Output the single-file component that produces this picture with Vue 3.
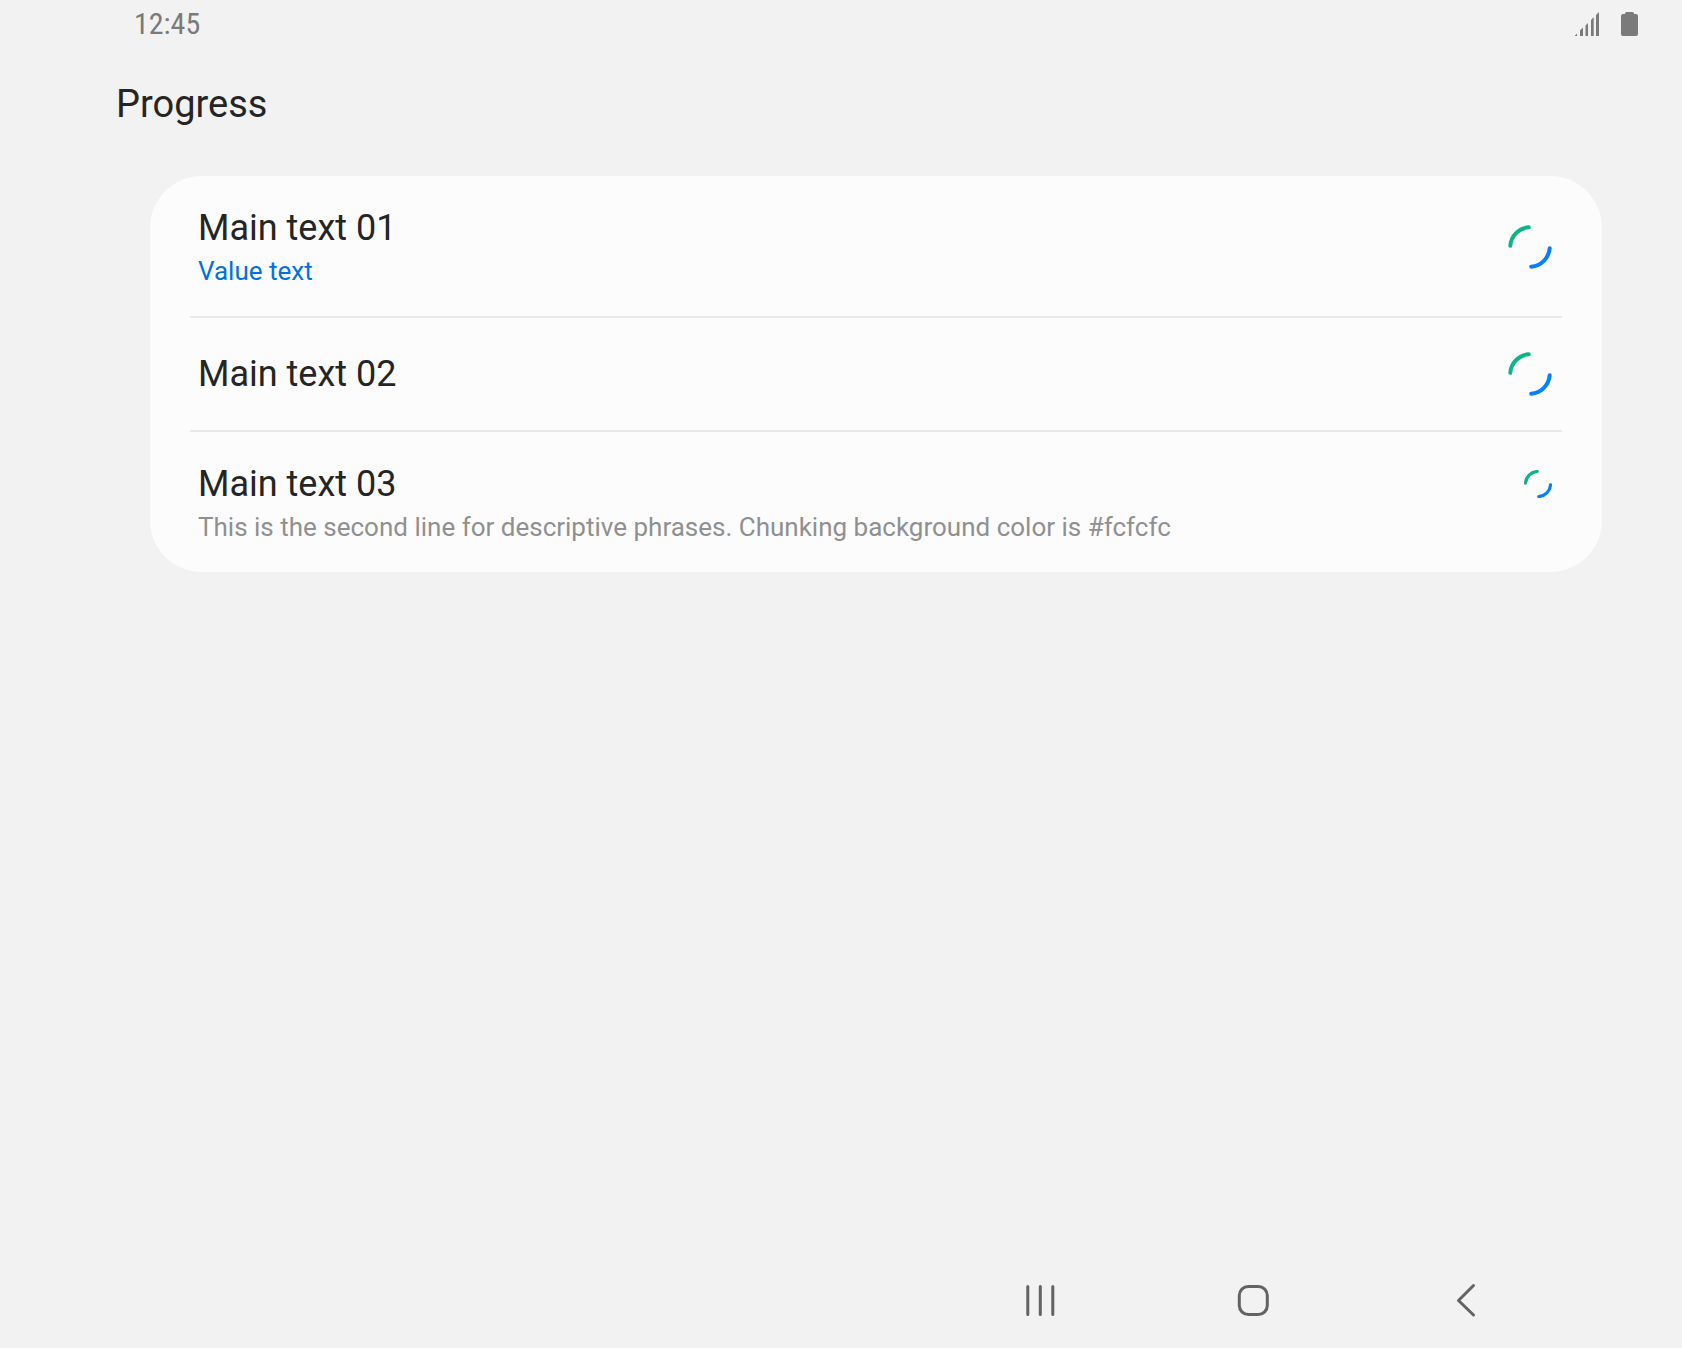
<script setup>
const rows = [
  { title: 'Main text 01', value: 'Value text' },
  { title: 'Main text 02' },
  {
    title: 'Main text 03',
    description: 'This is the second line for descriptive phrases. Chunking background color is #fcfcfc',
    small: true
  }
]
</script>

<template>
  <div class="screen">
    <div class="status-bar">
      <time class="clock">12:45</time>
      <div class="status-icons">
        <svg class="signal" viewBox="0 0 24 24" aria-label="Signal">
          <path d="M0 24V23.400L2 21.600V24ZM5 24V18.400L8 15.600V24ZM10.500 24V13.400L13 10.900V24ZM16 24V7.900L18.700 5.200V24ZM21 24V2.900L24 0V24Z" />
        </svg>
        <svg class="battery" viewBox="0 0 17 24" aria-label="Battery">
          <path d="M4 2V1.500Q4 0 5.500 0H11.500Q13 0 13 1.500V2H15Q17 2 17 4V22Q17 24 15 24H2Q0 24 0 22V4Q0 2 2 2Z" />
        </svg>
      </div>
    </div>

    <h1 class="page-title">Progress</h1>

    <main class="content">
      <ul class="card">
        <li
          v-for="row in rows"
          :key="row.title"
          class="row"
          :class="{ 'row-single': !row.value && !row.description, 'row-top': row.small }"
        >
          <div class="texts">
            <h2 class="row-title">{{ row.title }}</h2>
            <p v-if="row.value" class="sub value">{{ row.value }}</p>
            <p v-if="row.description" class="sub description">{{ row.description }}</p>
          </div>
          <svg
            class="spinner"
            :class="{ 'spinner-small': row.small }"
            viewBox="0 0 44 44"
            role="progressbar"
            :aria-label="row.title"
          >
            <path class="arc-green" d="M2.300 20.800A20 20 0 0 1 20.800 2.300" />
            <path class="arc-blue" d="M41.700 23.200A20 20 0 0 1 23.200 41.700" />
          </svg>
        </li>
      </ul>
    </main>

    <nav class="nav-bar">
      <button type="button" aria-label="Recents">
        <svg viewBox="0 0 36 36"><path d="M5.800 4.500V32.500M18.300 4.500V32.500M30.800 4.500V32.500" /></svg>
      </button>
      <button type="button" aria-label="Home">
        <svg viewBox="0 0 36 36"><rect x="4.300" y="4.500" width="28" height="28" rx="9" /></svg>
      </button>
      <button type="button" aria-label="Back">
        <svg viewBox="0 0 36 36"><path d="M25.500 3.500L10.500 18.500L25.500 33" /></svg>
      </button>
    </nav>
  </div>
</template>

<style>
body {
  margin: 0;
  background: #f2f2f2;
}
</style>

<style scoped>
.screen {
  display: flex;
  flex-direction: column;
  min-height: 100vh;
  font-family: Roboto, "Liberation Sans", sans-serif;
  color: #252525;
  background: #f2f2f2;
}

.status-bar {
  display: flex;
  align-items: center;
  justify-content: space-between;
  height: 48px;
  padding: 0 44px 0 134px;
  color: #7a7a7a;
}

.clock {
  font-family: "Roboto Condensed", Roboto, sans-serif;
  font-size: 30px;
  line-height: 48px;
}

.status-icons {
  display: flex;
  align-items: center;
  gap: 22px;
}

.status-icons svg {
  display: block;
  height: 24px;
  fill: currentColor;
}

.signal {
  width: 24px;
}

.battery {
  width: 17px;
}

.page-title {
  margin: 0;
  padding: 32px 116px 0;
  font-size: 38px;
  font-weight: 400;
  line-height: 48px;
}

.content {
  flex: 1;
  padding: 48px 80px 48px 150px;
}

.card {
  margin: 0;
  padding: 0 40px;
  list-style: none;
  background: #fcfcfc;
  border-radius: 52px;
}

.row {
  display: flex;
  align-items: center;
  justify-content: space-between;
  gap: 24px;
  padding: 28px 10px 26px 8px;
}

.row + .row {
  border-top: 2px solid #e8e8e8;
}

.row-single {
  padding-top: 32px;
  padding-bottom: 32px;
}

.row-top {
  align-items: flex-start;
}

.row-title {
  margin: 0;
  font-size: 36px;
  font-weight: 400;
  line-height: 48px;
}

.sub {
  margin: 0;
  font-size: 26px;
  line-height: 38px;
}

.value {
  color: #0072de;
}

.description {
  color: #909090;
}

.spinner {
  flex: none;
  width: 44px;
  height: 44px;
  fill: none;
  stroke-width: 4;
  stroke-linecap: round;
}

.spinner-small {
  width: 28px;
  height: 28px;
  margin-top: 10px;
  stroke-width: 5;
}

.arc-green {
  stroke: #0cb588;
}

.arc-blue {
  stroke: #0381fe;
}

.nav-bar {
  display: flex;
  justify-content: flex-end;
  height: 96px;
  padding-right: 110px;
}

.nav-bar button {
  display: flex;
  align-items: center;
  justify-content: center;
  width: 213px;
  padding: 0;
  color: #636363;
  background: none;
  border: 0;
}

.nav-bar svg {
  width: 36px;
  height: 36px;
  fill: none;
  stroke: currentColor;
  stroke-width: 3;
  stroke-linecap: round;
  stroke-linejoin: round;
}
</style>
